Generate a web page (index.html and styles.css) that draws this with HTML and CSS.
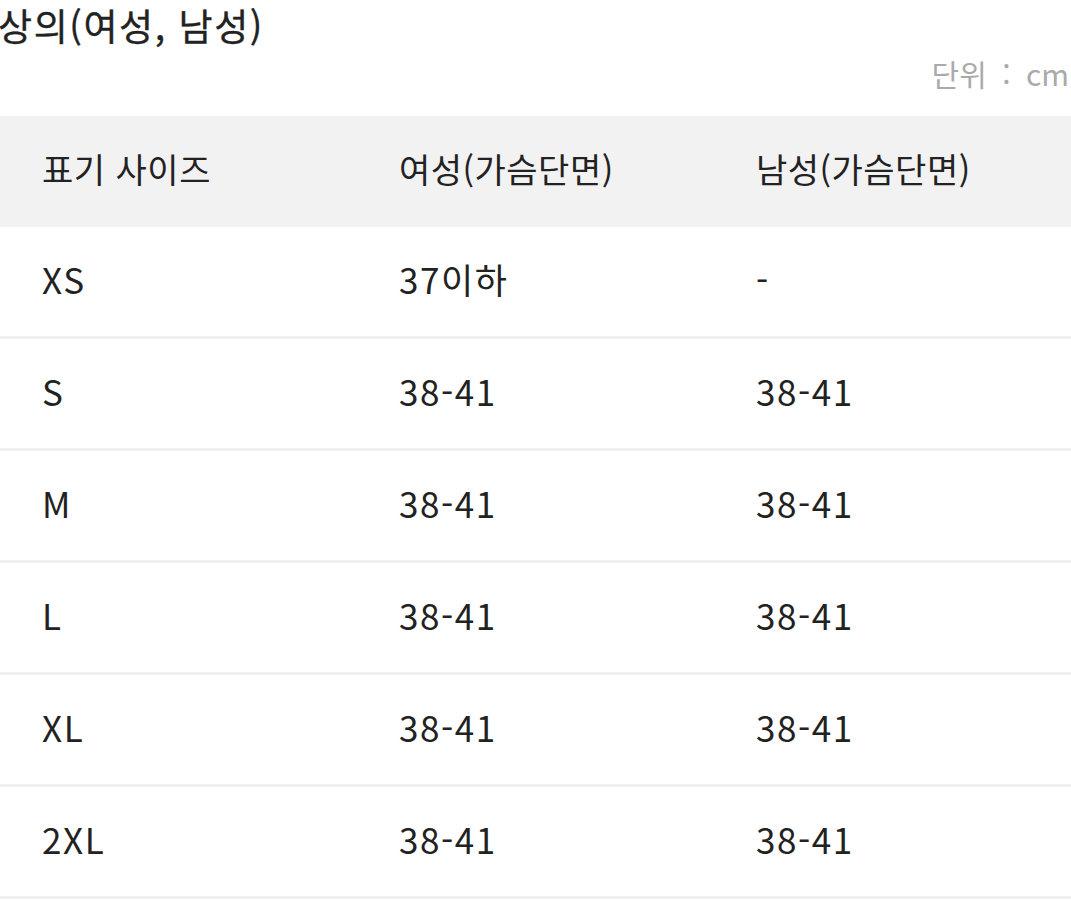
FILE: index.html
```html
<!DOCTYPE html>
<html lang="ko">
<head>
<meta charset="utf-8">
<link rel="stylesheet" href="styles.css">
</head>
<body>
<h1 class="title">상의(여성, 남성)</h1>
<p class="unit">단위 : cm</p>
<table class="size-table">
  <thead>
    <tr><th>표기 사이즈</th><th>여성(가슴단면)</th><th>남성(가슴단면)</th></tr>
  </thead>
  <tbody>
    <tr><td>XS</td><td>37이하</td><td>-</td></tr>
    <tr><td>S</td><td>38-41</td><td>38-41</td></tr>
    <tr><td>M</td><td>38-41</td><td>38-41</td></tr>
    <tr><td>L</td><td>38-41</td><td>38-41</td></tr>
    <tr><td>XL</td><td>38-41</td><td>38-41</td></tr>
    <tr><td>2XL</td><td>38-41</td><td>38-41</td></tr>
  </tbody>
</table>
</body>
</html>
```
FILE: styles.css
```css
html, body {
  margin: 0;
  padding: 0;
  background: #fff;
}
body {
  font-family: "Noto Sans CJK KR", "Noto Sans", sans-serif;
  color: #222;
}
.title {
  margin: 0 0 0 -2px;
  font-size: 37px;
  font-weight: 400;
  line-height: 50px;
  letter-spacing: 1.6px;
  color: #222;
  -webkit-text-stroke: 0.35px #222;
}
.unit {
  margin: 2px 2px 22px 0;
  font-size: 30px;
  line-height: 42px;
  text-align: right;
  color: #aaa;
  word-spacing: 7px;
}
.size-table {
  width: 100%;
  border-collapse: collapse;
  table-layout: fixed;
}
.size-table th,
.size-table td {
  text-align: left;
  padding: 0 0 7px 42px;
  font-size: 34px;
  font-weight: 400;
  letter-spacing: 0.5px;
}
.size-table th {
  background: #f2f2f2;
  height: 104px;
}
.size-table td {
  height: 102px;
  border-bottom: 3px solid #efefef;
  font-size: 35px;
  letter-spacing: 1.6px;
}
```
